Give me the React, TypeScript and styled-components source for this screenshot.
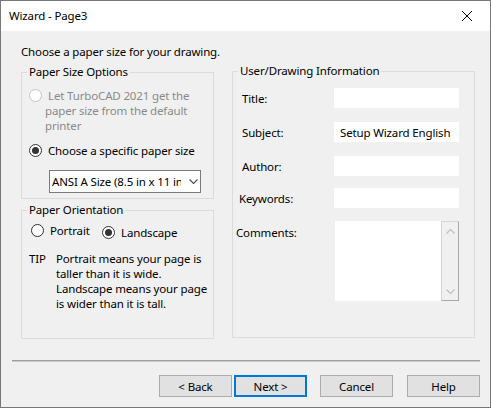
import React from 'react';
import styled, { createGlobalStyle } from 'styled-components';

const GlobalStyle = createGlobalStyle`
  html, body {
    margin: 0;
    padding: 0;
    background: #f0f0f0;
  }
  body {
    font-family: 'Segoe UI', 'Noto Sans', 'Open Sans', sans-serif;
    font-size: 11.5px;
    letter-spacing: -0.15px;
    color: #000000;
  }
`;

const Window = styled.div`
  width: 491px;
  height: 408px;
  box-sizing: border-box;
  border: 1px solid #777777;
  background: #f0f0f0;
  display: flex;
  flex-direction: column;
  overflow: hidden;
`;

const TitleBar = styled.div`
  height: 30px;
  flex-shrink: 0;
  background: #ffffff;
  display: flex;
  align-items: center;
  justify-content: space-between;
  padding-left: 8px;
`;

const TitleText = styled.span`
  line-height: 16px;
`;

const CloseButton = styled.div`
  width: 46px;
  height: 30px;
  display: flex;
  align-items: center;
  justify-content: center;
`;

const Content = styled.div`
  padding: 13px 15px 0 20px;
`;

const Intro = styled.div`
  line-height: 15px;
  white-space: nowrap;
`;

const Columns = styled.div`
  display: flex;
  gap: 18px;
  margin-top: 4px;
`;

const LeftColumn = styled.div`
  width: 193px;
  display: flex;
  flex-direction: column;
  gap: 3px;
  padding-top: 1px;
`;

const Group = styled.fieldset<{ $h: number; $w: number }>`
  box-sizing: border-box;
  width: ${p => p.$w}px;
  height: ${p => p.$h}px;
  margin: 0;
  padding: 0;
  border: 1px solid #dcdcdc;
  min-width: 0;
`;

const Legend = styled.legend`
  margin-left: 5px;
  padding: 0 2px;
  line-height: 16px;
`;

const GroupBody = styled.div<{ $pt: number; $pl: number }>`
  padding: ${p => p.$pt}px 0 0 ${p => p.$pl}px;
`;

const RadioRow = styled.div<{ $gap: number; $mt?: number }>`
  display: flex;
  align-items: flex-start;
  gap: ${p => p.$gap}px;
  margin-top: ${p => p.$mt ?? 0}px;
`;

const RadioCircle = styled.span<{ $checked?: boolean; $disabled?: boolean }>`
  flex-shrink: 0;
  box-sizing: border-box;
  width: 13px;
  height: 13px;
  margin-top: 1px;
  border-radius: 50%;
  border: 1px solid ${p => (p.$disabled ? '#c4c4c4' : '#333333')};
  background: #ffffff;
  display: flex;
  align-items: center;
  justify-content: center;

  &::after {
    content: '';
    display: ${p => (p.$checked ? 'block' : 'none')};
    width: 7px;
    height: 7px;
    border-radius: 50%;
    background: #333333;
  }
`;

const RadioLabel = styled.span<{ $disabled?: boolean; $indent?: number }>`
  line-height: 15px;
  white-space: nowrap;
  color: ${p => (p.$disabled ? '#8a8a8a' : '#000000')};
  text-indent: ${p => p.$indent ?? 0}px;
`;

const Select = styled.div`
  box-sizing: border-box;
  width: 152px;
  height: 23px;
  margin: 12px 0 0 20px;
  background: #ffffff;
  border: 1px solid #7a7a7a;
  display: flex;
  align-items: center;
  padding-left: 2px;
`;

const SelectText = styled.span`
  width: 129px;
  overflow: hidden;
  white-space: nowrap;
  line-height: 15px;
`;

const SelectArrow = styled.span`
  margin-left: 8px;
  display: flex;
`;

const OrientationRow = styled.div`
  display: grid;
  grid-template-columns: 71px auto;
  align-items: start;
`;

const Option = styled.div<{ $drop?: number }>`
  display: flex;
  align-items: flex-start;
  gap: 6px;
  margin-top: ${p => p.$drop ?? 0}px;
`;

const Tip = styled.div`
  display: grid;
  grid-template-columns: 27px auto;
  margin-top: 11px;
  margin-left: -2px;
  line-height: 15px;
`;

const TipText = styled.div`
  white-space: nowrap;
`;

const FieldRow = styled.div<{ $mt: number; $top?: boolean }>`
  display: flex;
  align-items: ${p => (p.$top ? 'flex-start' : 'center')};
  margin-top: ${p => p.$mt}px;
  padding: 0 15px 0 9px;
`;

const FieldLabel = styled.span<{ $shift?: number; $top?: boolean }>`
  flex: 1;
  line-height: 15px;
  margin-left: ${p => p.$shift ?? 0}px;
  margin-top: ${p => (p.$top ? 4 : 0)}px;
`;

const TextBox = styled.input`
  box-sizing: border-box;
  width: 125px;
  height: 20px;
  border: none;
  outline: none;
  background: #ffffff;
  padding: 0 0 0 6px;
  margin: 0;
  font: inherit;
  letter-spacing: inherit;
  color: #000000;
`;

const MemoBox = styled.div`
  width: 124px;
  height: 80px;
  display: flex;
  background: #ffffff;
`;

const MemoArea = styled.div`
  flex: 1;
`;

const ScrollBar = styled.div`
  box-sizing: border-box;
  width: 18px;
  border: 1px solid #d6d6d6;
  border-right-color: #a8a8a8;
  border-bottom-color: #a8a8a8;
  background: #f0f0f0;
  display: flex;
  flex-direction: column;
  justify-content: space-between;
  align-items: center;
  padding: 7px 0 6px;
`;

const Separator = styled.div`
  margin: 21px 10px 0 11px;
  height: 1px;
  background: #a0a0a0;
  border-bottom: 1px solid #c8c8c8;
`;

const Footer = styled.div`
  display: flex;
  justify-content: flex-end;
  padding: 13px 10px 0 0;
`;

const Button = styled.div<{ $default?: boolean; $ml: number }>`
  box-sizing: border-box;
  width: 73px;
  height: 22px;
  margin-left: ${p => p.$ml}px;
  background: #e1e1e1;
  border: ${p => (p.$default ? '2px solid #0078d7' : '1px solid #adadad')};
  display: flex;
  align-items: center;
  justify-content: center;
  line-height: 15px;
`;

const Chevron = ({ up, color }: { up?: boolean; color: string }) => (
  <svg width="9" height="5" viewBox="0 0 9 5">
    <polyline
      points={up ? '0.5,4.5 4.5,0.5 8.5,4.5' : '0.5,0.5 4.5,4.5 8.5,0.5'}
      fill="none"
      stroke={color}
      strokeWidth="1.2"
    />
  </svg>
);

export default function App() {
  return (
    <>
      <GlobalStyle />
      <Window>
        <TitleBar>
          <TitleText>Wizard - Page3</TitleText>
          <CloseButton>
            <svg width="10" height="10" viewBox="0 0 10 10">
              <path d="M0 0 L10 10 M10 0 L0 10" stroke="#000" strokeWidth="1" />
            </svg>
          </CloseButton>
        </TitleBar>

        <Content>
          <Intro>Choose a paper size for your drawing.</Intro>
          <Columns>
            <LeftColumn>
              <Group $w={193} $h={135}>
                <Legend>Paper Size Options</Legend>
                <GroupBody $pt={8} $pl={7}>
                  <RadioRow $gap={3}>
                    <RadioCircle $disabled />
                    <RadioLabel $disabled $indent={3}>
                      Let TurboCAD 2021 get the
                      <br />
                      paper size from the default
                      <br />
                      printer
                    </RadioLabel>
                  </RadioRow>
                  <RadioRow $gap={6} $mt={10}>
                    <RadioCircle $checked />
                    <RadioLabel>Choose a specific paper size</RadioLabel>
                  </RadioRow>
                  <Select>
                    <SelectText>ANSI A Size (8.5 in x 11 in)</SelectText>
                    <SelectArrow>
                      <Chevron color="#555555" />
                    </SelectArrow>
                  </Select>
                </GroupBody>
              </Group>

              <Group $w={193} $h={137}>
                <Legend>Paper Orientation</Legend>
                <GroupBody $pt={5} $pl={9}>
                  <OrientationRow>
                    <Option>
                      <RadioCircle />
                      <RadioLabel>Portrait</RadioLabel>
                    </Option>
                    <Option $drop={2}>
                      <RadioCircle $checked />
                      <RadioLabel>Landscape</RadioLabel>
                    </Option>
                  </OrientationRow>
                  <Tip>
                    <span>TIP</span>
                    <TipText>
                      Portrait means your page is
                      <br />
                      taller than it is wide.
                      <br />
                      Landscape means your page
                      <br />
                      is wider than it is tall.
                    </TipText>
                  </Tip>
                </GroupBody>
              </Group>
            </LeftColumn>

            <Group $w={243} $h={275}>
              <Legend>User/Drawing Information</Legend>
              <FieldRow $mt={9}>
                <FieldLabel>Title:</FieldLabel>
                <TextBox readOnly value="" />
              </FieldRow>
              <FieldRow $mt={14}>
                <FieldLabel>Subject:</FieldLabel>
                <TextBox readOnly value="Setup Wizard English" />
              </FieldRow>
              <FieldRow $mt={14}>
                <FieldLabel>Author:</FieldLabel>
                <TextBox readOnly value="" />
              </FieldRow>
              <FieldRow $mt={12}>
                <FieldLabel $shift={-3}>Keywords:</FieldLabel>
                <TextBox readOnly value="" />
              </FieldRow>
              <FieldRow $mt={13} $top>
                <FieldLabel $shift={-6} $top>
                  Comments:
                </FieldLabel>
                <MemoBox>
                  <MemoArea />
                  <ScrollBar>
                    <Chevron up color="#c0c0c0" />
                    <Chevron color="#c0c0c0" />
                  </ScrollBar>
                </MemoBox>
              </FieldRow>
            </Group>
          </Columns>
        </Content>

        <Separator />
        <Footer>
          <Button $ml={0}>&lt; Back</Button>
          <Button $ml={2} $default>
            Next &gt;
          </Button>
          <Button $ml={13}>Cancel</Button>
          <Button $ml={14}>Help</Button>
        </Footer>
      </Window>
    </>
  );
}
